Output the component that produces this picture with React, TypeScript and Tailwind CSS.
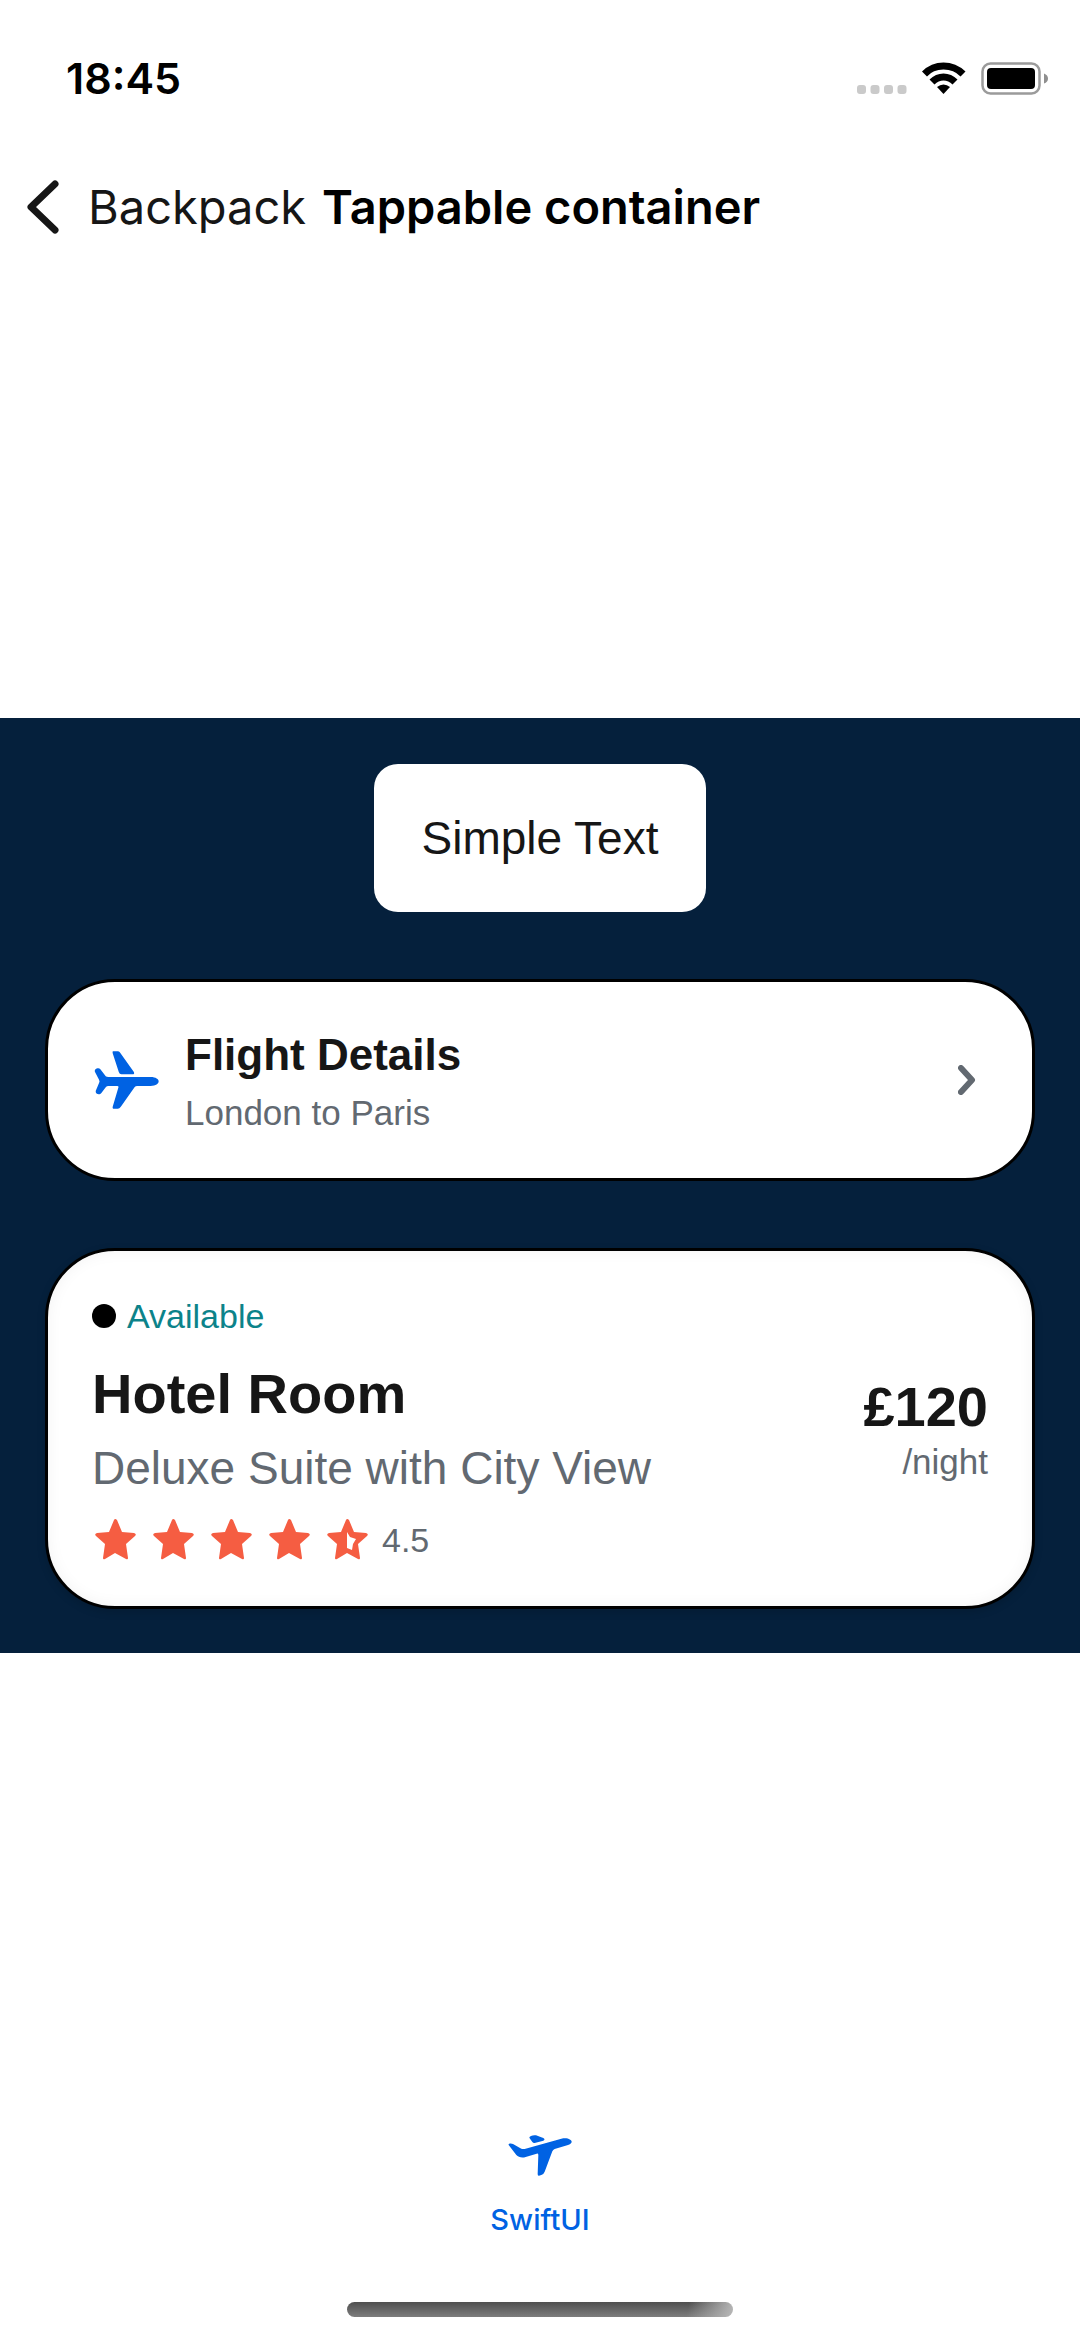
import type { ReactNode } from "react";

const STAR =
  "M19 1Q20 -1 22 1L27 13L39 14Q42 15 40 17L31 25L33 39Q33 41 31 40L20 34L10 40Q8 41 8 39L10 25L1 17Q-1 15 2 14L14 13Z";
const STAR_CUTOUT = "M20 13L23 18L29 20L26 25L25 31L20 29Z";

function Star({ half = false }: { half?: boolean }) {
  return (
    <svg className="h-[46px] w-[46px]" viewBox="-3 -2 46 46" fill="#f55d42" fillRule="evenodd" aria-hidden="true">
      <path d={half ? `${STAR}${STAR_CUTOUT}` : STAR} />
    </svg>
  );
}

function FlightIcon() {
  return (
    <svg className="h-[58px] w-[69px]" viewBox="187 243 206 172" fill="#0062e3" aria-hidden="true">
      <path d="M250 243H264Q268 243 270 246L312 305Q315 312 308 312H275Q269 312 267 305L249 250Q247 243 250 243Z" />
      <path d="M196 305C192 296 207 290 212 297L228 318Q231 320 236 320H362C378 320 386 327 386 333C386 340 378 347 362 347H322Q317 347 314 351L273 409Q269 415 264 415H253Q247 415 249 408L266 351Q267 347 262 347H236Q231 347 228 351L215 368C210 375 197 372 198 362L208 338Q211 333 208 328Z" />
    </svg>
  );
}

function TakeoffIcon() {
  return (
    <svg className="h-[41px] w-16" viewBox="563 105 190 123" fill="#0062e3" aria-hidden="true">
      <path d="M627 115C622 108 640 103 650 107L668 114Q675 119 668 122L642 129Q638 130 635 126Z" />
      <path d="M564 135C562 130 572 129 577 132L602 146Q606 148 612 147L722 116C740 111 754 119 753 126C752 131 748 133 742 135L702 147Q697 149 695 154L672 215Q669 223 662 225L655 227Q651 228 651 222L653 165Q653 160 648 161L615 171C603 175 593 171 587 165Z" />
    </svg>
  );
}

function StatusBar() {
  return (
    <div className="flex h-[156px] items-center justify-between pr-[31px] pl-[66px] font-['Inter']">
      <span className="text-[43px] leading-[60px] font-semibold text-black">18:45</span>
      <svg className="h-[33px] w-48" viewBox="0 0 192 33" aria-hidden="true">
        <g fill="#cacaca">
          <rect x="0" y="23" width="9" height="9" rx="3" />
          <rect x="13.500" y="23" width="9" height="9" rx="3" />
          <rect x="27" y="23" width="9" height="9" rx="3" />
          <rect x="40.500" y="23" width="9" height="9" rx="3" />
        </g>
        <path d="M65 9.500Q74 0.500 86.500 0.500T108.500 9.500L103.500 14.500Q97 7.500 86.500 7.500T70 14.500Z" />
        <path d="M72.500 17.500Q78.500 11.500 86.500 11.500T100.500 17.500L95.500 22.500Q91.500 18.500 86.500 18.500T77.500 22.500Z" />
        <path d="M80 25Q83 22.500 86.500 22.500T93 25L86.500 32Z" />
        <rect x="125.500" y="1.500" width="57" height="30" rx="8" fill="none" stroke="#9b9b9b" strokeWidth="2.500" />
        <rect x="130" y="6" width="48" height="21" rx="4" />
        <path d="M187 11.500Q191 13 191 16.500T187 21.500Z" fill="#8f8f8f" />
      </svg>
    </div>
  );
}

function NavigationBar() {
  return (
    <header className="flex h-[105px] items-start gap-4 pt-[21px] pl-[26px] font-['Inter'] text-[47px] leading-[60px]">
      <button type="button" className="flex items-center gap-[29px] text-[#161616]">
        <svg className="h-[54px] w-[33px]" viewBox="0 0 33 54" fill="none" stroke="#161616" strokeWidth="7" strokeLinecap="round" strokeLinejoin="round" aria-hidden="true">
          <path d="M29 4L5 27L29 50" />
        </svg>
        Backpack
      </button>
      <h1 className="font-semibold text-black">Tappable container</h1>
    </header>
  );
}

function Card({ elevated = false, children }: { elevated?: boolean; children: ReactNode }) {
  const shadow = elevated ? "shadow-[inset_0_0_16px_rgba(0,0,0,0.05),0_3px_9px_rgba(0,0,0,0.15)]" : "";
  return (
    <button
      type="button"
      className={`flex w-full items-center rounded-[70px] border-3 border-black bg-white px-[44px] py-[43px] text-left ${shadow}`}
    >
      {children}
    </button>
  );
}

export default function App() {
  return (
    <div className="flex min-h-screen flex-col bg-white font-['Liberation_Sans',sans-serif] text-[#161616]">
      <StatusBar />
      <NavigationBar />

      <main className="flex flex-1 flex-col justify-center">
        <section className="flex flex-col items-center gap-[67px] bg-[#05203c] px-[45px] pt-[46px] pb-[44px]">
          <button type="button" className="rounded-[24px] bg-white px-12 py-[44px] text-[46px] leading-[60px]">
            Simple Text
          </button>

          <Card>
            <FlightIcon />
            <span className="ml-6 flex flex-1 flex-col gap-[6px]">
              <span className="text-[44px] leading-[60px] font-bold">Flight Details</span>
              <span className="text-[35px] leading-[44px] text-[#626971]">London to Paris</span>
            </span>
            <svg className="mr-3 h-[30px] w-[18px]" viewBox="0 0 18 30" fill="none" stroke="#626971" strokeWidth="6" strokeLinecap="round" strokeLinejoin="round" aria-hidden="true">
              <path d="M3 3L14 15L3 27" />
            </svg>
          </Card>

          <Card elevated>
            <span className="flex flex-1 flex-col">
              <span className="mb-3 flex items-center gap-[11px] text-[34px] leading-[44px] text-[#0c838a]">
                <span className="h-6 w-6 rounded-full bg-black" />
                Available
              </span>
              <span className="text-[56px] leading-[88px] font-bold">Hotel Room</span>
              <span className="text-[46px] leading-[60px] text-[#626971]">Deluxe Suite with City View</span>
              <span className="mt-[19px] flex items-center gap-3">
                <Star />
                <Star />
                <Star />
                <Star />
                <Star half />
                <span className="text-[34px] leading-[44px] text-[#626971]">4.5</span>
              </span>
            </span>
            <span className="flex flex-col items-end">
              <span className="text-[56px] leading-[66px] font-bold">£120</span>
              <span className="text-[35px] leading-[44px] text-[#626971]">/night</span>
            </span>
          </Card>
        </section>
      </main>

      <footer className="flex h-[230px] flex-col items-center justify-between pt-[25px] pb-[23px]">
        <button type="button" className="flex flex-col items-center gap-6 font-['Inter'] text-[29px] leading-[40px] font-medium text-[#0062e3]">
          <TakeoffIcon />
          SwiftUI
        </button>
        <div className="h-[15px] w-[386px] rounded-full bg-[linear-gradient(100deg,transparent_88%,#b8b8b8),linear-gradient(to_bottom,#4f4f4f,#7d7d7d)]" />
      </footer>
    </div>
  );
}
